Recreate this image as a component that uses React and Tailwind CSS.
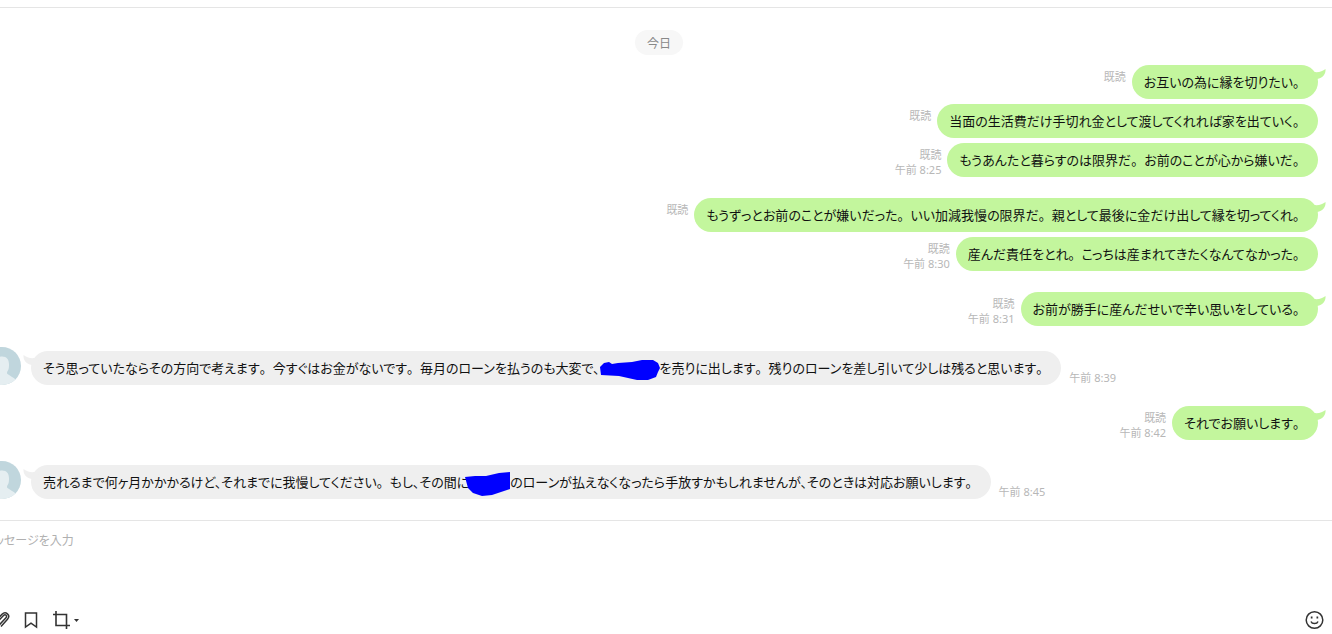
import { memo } from 'react';

const THREAD = [
    {
        from: 'me',
        messages: [
            { text: 'お互いの為に縁を切りたい。', read: true },
            { text: '当面の生活費だけ手切れ金として渡してくれれば家を出ていく。', read: true },
            { text: 'もうあんたと暮らすのは限界だ。お前のことが心から嫌いだ。', read: true, time: '午前 8:25' },
        ],
    },
    {
        from: 'me',
        messages: [
            { text: 'もうずっとお前のことが嫌いだった。いい加減我慢の限界だ。親として最後に金だけ出して縁を切ってくれ。', read: true },
            { text: '産んだ責任をとれ。こっちは産まれてきたくなんてなかった。', read: true, time: '午前 8:30' },
        ],
    },
    {
        from: 'me',
        messages: [{ text: 'お前が勝手に産んだせいで辛い思いをしている。', read: true, time: '午前 8:31' }],
    },
    {
        from: 'them',
        messages: [
            {
                text: 'そう思っていたならその方向で考えます。今すぐはお金がないです。毎月のローンを払うのも大変で、',
                scribble: 'long',
                rest: 'を売りに出します。残りのローンを差し引いて少しは残ると思います。',
                time: '午前 8:39',
            },
        ],
    },
    {
        from: 'me',
        messages: [{ text: 'それでお願いします。', read: true, time: '午前 8:42' }],
    },
    {
        from: 'them',
        messages: [
            {
                text: '売れるまで何ヶ月かかかるけど、それまでに我慢してください。もし、その間に',
                scribble: 'short',
                rest: 'のローンが払えなくなったら手放すかもしれませんが、そのときは対応お願いします。',
                time: '午前 8:45',
            },
        ],
    },
];

// Proportional kana, but full stops keep their full width
const Sentences = ({ text = '' }) =>
    text.split(/(。)/).map((part, i) =>
        part === '。' ? (
            <span key={i} className="[font-feature-settings:normal]">
                {part}
            </span>
        ) : (
            part
        )
    );

// Hand-drawn marker strokes that hide a word
const Scribble = ({ kind }) =>
    kind === 'long' ? (
        <svg className="-my-2 inline-block h-5 w-[60px] align-middle" viewBox="0 0 60 20" aria-hidden="true">
            <path d="M0 7 4 3 9 2 12 4 18 3 32 2 42 0 53 0 58 3 60 8 58 12 56 17 48 20 37 20 28 18 19 16 1 15Z" fill="#0000ff" />
        </svg>
    ) : (
        <svg className="-my-2 -ml-1 inline-block h-6 w-[45px] align-middle" viewBox="0 0 45 24" aria-hidden="true">
            <path d="M0 5 10 4 21 4 34 1 45 0 45 17 36 20 27 23 17 24 8 21 3 16Z" fill="#0000ff" />
        </svg>
    );

const Avatar = () => (
    <svg className="-ml-[17px] size-[38px] shrink-0" viewBox="0 0 38 38" role="img" aria-label="プロフィール">
        <clipPath id="avatar-clip">
            <circle cx="19" cy="19" r="19" />
        </clipPath>
        <g clipPath="url(#avatar-clip)">
            <rect width="38" height="38" fill="#c0d6dd" />
            <path d="M19 9.500c-5 0-8 3-8 8 0 4 1 7 4 9 0 2-4 3-11 6v7h26l4-6c-3-3-8-5-10-7 0-1 0-2 1-3 1-2 1-4 1-6 0-5-2-8-7-8Z" fill="#e5eef1" />
        </g>
    </svg>
);

const Tail = ({ mine }) =>
    mine ? (
        <svg className="absolute top-1 -right-2 h-3 w-4" viewBox="0 0 16 12" aria-hidden="true">
            <path d="M4 3C9 3.500 12.500 2.500 15.500 0 16 5 13 9 7 10L0 6Z" fill="#c3f69d" />
        </svg>
    ) : (
        <svg className="absolute top-1 -left-2 h-3 w-4" viewBox="0 0 16 12" aria-hidden="true">
            <path d="M12 3C7 3.500 3.500 2.500 .5 0 0 5 3 9 9 10L16 6Z" fill="#efefef" />
        </svg>
    );

const Message = memo(({ message, mine, first }) => (
    <div className={mine ? 'flex flex-row-reverse items-start gap-1.5' : 'flex items-end gap-2'}>
        <div
            className={`relative min-w-0 rounded-[17px] px-3 py-[7px] text-[13px] leading-5 text-[#111] ${
                mine ? 'bg-[#c3f69d]' : 'bg-[#efefef]'
            }`}
        >
            {first && <Tail mine={mine} />}
            <p className="relative">
                <Sentences text={message.text} />
                {message.scribble && <Scribble kind={message.scribble} />}
                <Sentences text={message.rest} />
            </p>
        </div>
        <div className={`shrink-0 text-[11px] leading-[15px] text-[#b7b7b7] ${mine ? 'pt-1 text-right' : ''}`}>
            {message.read && <p>既読</p>}
            {message.time && <p>{message.time}</p>}
        </div>
    </div>
));

Message.displayName = 'Message';

const MessageGroup = ({ group }) => {
    const mine = group.from === 'me';
    return (
        <li className="flex gap-2.5">
            {!mine && <Avatar />}
            <div className={`flex min-w-0 flex-1 flex-col gap-[5px] ${mine ? '' : 'pt-1'}`}>
                {group.messages.map((message, i) => (
                    <Message key={message.text} message={message} mine={mine} first={i === 0} />
                ))}
            </div>
        </li>
    );
};

const Composer = () => (
    <form className="flex flex-col border-t border-[#e5e5e5] pt-2.5">
        <textarea
            aria-label="メッセージを入力"
            placeholder="メッセージを入力"
            className="-ml-4 block h-[79px] resize-none overflow-hidden text-xs leading-5 outline-none placeholder:text-[#b0b0b0]"
        />
        <div className="flex items-center justify-between pr-2 pb-1 text-[#333]">
            <div className="flex items-center">
                <button type="button" aria-label="ファイルを添付" className="-ml-2">
                    <svg className="size-[18px]" viewBox="0 0 18 18" fill="none" stroke="currentColor" strokeWidth="1.500">
                        <path d="M5 11.500 11.500 4.500c1.800-1.800 4.200.3 2.500 2.200L7 14.200c-2.800 2.700-6.500-.6-3.900-3.500L10 3.300c3.700-3.800 9 .9 5.500 4.900L9 15.500" />
                    </svg>
                </button>
                <button type="button" aria-label="Keep" className="ml-3">
                    <svg className="size-[18px]" viewBox="0 0 18 18" fill="none" stroke="currentColor" strokeWidth="1.500">
                        <path d="M3.500 2h11v14L9 12.200 3.500 16Z" />
                    </svg>
                </button>
                <button type="button" aria-label="画面キャプチャ" className="ml-3 flex items-center gap-1">
                    <svg className="size-[18px]" viewBox="0 0 18 18" fill="none" stroke="currentColor" strokeWidth="1.600">
                        <path d="M4 0v14.500H18M1 3.500h13.500V18" />
                    </svg>
                    <svg className="h-[3px] w-[5px]" viewBox="0 0 5 3" fill="currentColor">
                        <path d="M0 0h5L2.500 3Z" />
                    </svg>
                </button>
            </div>
            <button type="button" aria-label="スタンプ">
                <svg className="size-5" viewBox="0 0 20 20" fill="none" stroke="currentColor" strokeWidth="1.500">
                    <circle cx="10.500" cy="10" r="8.300" />
                    <path d="M7 11.500c1 2.700 6 2.700 7 0" />
                    <path d="M6.800 7.500h1.700M12.500 7.500h1.700" strokeWidth="1.800" />
                </svg>
            </button>
        </div>
    </form>
);

export default function App() {
    return (
        <div className="flex min-h-screen flex-col overflow-x-hidden bg-white pt-[7px] font-['Noto_Sans','Noto_Sans_CJK_JP',sans-serif] [font-feature-settings:'palt']">
            <main className="flex flex-1 flex-col border-t border-[#e5e5e5] pt-[22px] pr-3.5">
                <p className="self-center rounded-full bg-[#f7f7f7] px-3 pt-[5px] pb-[3px] text-xs leading-[17px] text-[#888]">
                    今日
                </p>
                <ul className="mt-2.5 flex flex-col gap-[21px]">
                    {THREAD.map((group) => (
                        <MessageGroup key={group.messages[0].text} group={group} />
                    ))}
                </ul>
            </main>
            <Composer />
        </div>
    );
}
